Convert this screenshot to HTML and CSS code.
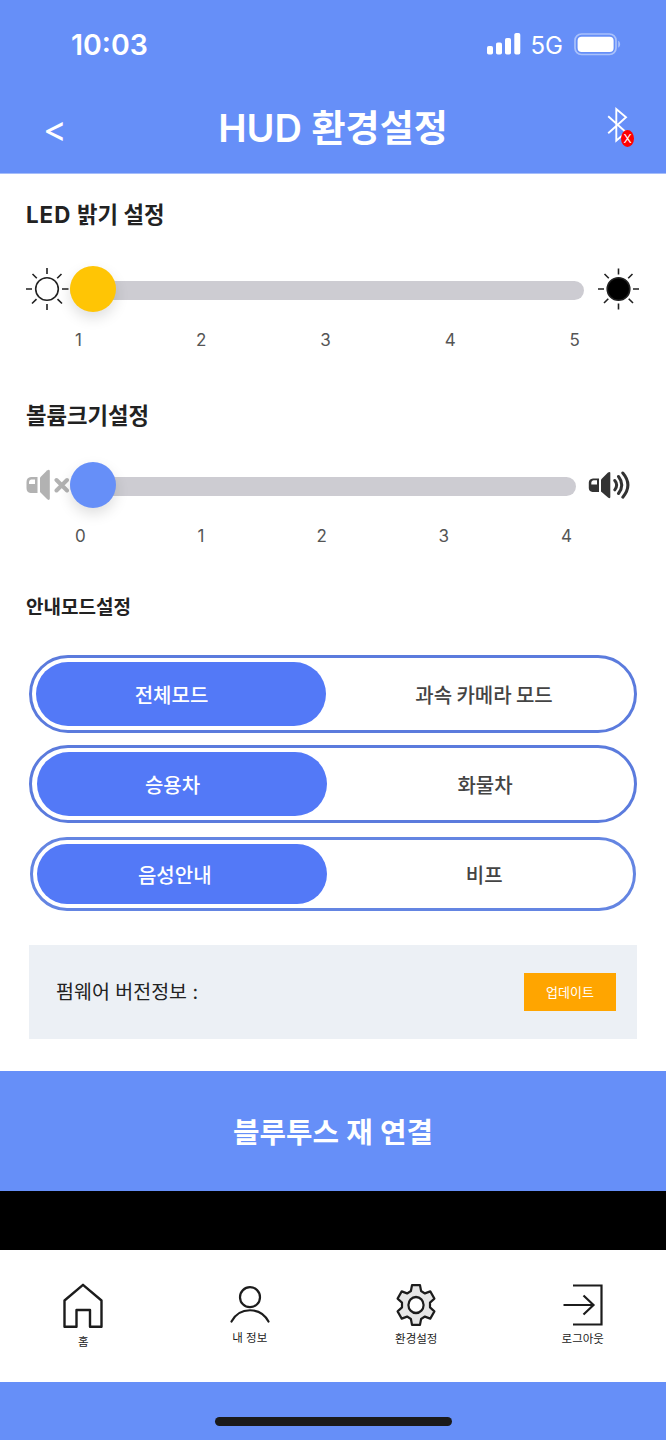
FILE: index.html
```html
<!DOCTYPE html>
<html lang="ko">
<head>
  <meta charset="UTF-8" />
  <meta name="viewport" content="width=device-width, initial-scale=1.0" />
  <title>HUD 환경설정</title>
  <link rel="stylesheet" href="styles.css">
</head>
<body>

  <div class="status-bar">
    <span class="time">10:03</span>
    <div class="status-icons">
      <svg class="signal" width="34" height="22" viewBox="0 0 34 22" fill="#fff">
        <rect x="0" y="13" width="6" height="8.5" rx="1.8" />
        <rect x="9" y="9.5" width="6" height="12" rx="1.8" />
        <rect x="18" y="5" width="6" height="16.5" rx="1.8" />
        <rect x="27.3" y="0" width="6" height="21.5" rx="1.8" />
      </svg>
      <span class="network">5G</span>
      <svg class="battery" width="48" height="23" viewBox="0 0 48 23">
        <rect x="1" y="1" width="41" height="20.5" rx="6.5" fill="none" stroke="#a9c1fb" stroke-width="1.7" />
        <rect x="3.6" y="3.7" width="36" height="15.2" rx="4" fill="#fff" />
        <path d="M44.2 7.8c2.6 1.3 2.6 5.6 0 7z" fill="#a9c1fb" />
      </svg>
    </div>
  </div>

  <header>
    <a class="back" href="#">&lt;</a>
    <h1>HUD <span>환경설정</span></h1>
    <div class="bluetooth">
      <svg width="22" height="38" viewBox="0 0 22 38" fill="none" stroke="#fff" stroke-width="1.9">
        <path d="M1.2 10.2L19 26.2L9.3 34.6V3L19 11.2L1.2 27.2" />
      </svg>
      <span class="badge">X</span>
    </div>
  </header>

  <main>
    <!-- LED 밝기 -->
    <section class="setting">
      <h2><span>LED</span> 밝기 설정</h2>
      <div class="slider-row">
        <svg width="43" height="42" viewBox="0 0 43 42" fill="none" stroke="#222" stroke-width="1.6">
          <circle cx="21" cy="21" r="11.3" />
          <path d="M21 0v6M21 36v6M0 21h6M36 21h6.5M6.5 6l4.3 4.3M35.5 6l-4.3 4.3M6 35.5l4.5-4.3M36 35.5l-4.5-4.3" />
        </svg>
        <div class="slider">
          <div class="thumb yellow"></div>
        </div>
        <svg width="41" height="42" viewBox="0 0 41 42" stroke="#222" stroke-width="1.6">
          <circle cx="20.5" cy="21" r="11.3" fill="#000" />
          <path d="M20.5 0.5v6M20.5 35.5v6M0 21h6M35 21h6M6.5 6l4.3 4.3M34.5 6l-4.3 4.3M6 35l4.3-4.3M35 35l-4.3-4.3" />
        </svg>
      </div>
      <div class="ticks">
        <span>1</span><span>2</span><span>3</span><span>4</span><span>5</span>
      </div>
    </section>

    <!-- 볼륨 -->
    <section class="setting volume">
      <h2>볼륨크기설정</h2>
      <div class="slider-row">
        <svg width="43" height="32" viewBox="0 0 43 32" fill="#b2b2b2">
          <path fill-rule="evenodd" d="M5 8h6.500V24H4.500Q.5 23.500 .5 19V13Q.5 8.500 5 8zM5 10.500Q3 11 3 13V15H9V10.500z" />
          <path d="M14 8.500L21 1.500Q23.500 0 23.800 2V29.500Q23.500 32 21 30L14 23z" />
          <path d="M30.500 11l10.500 10.500M41 11L30.500 21.500" stroke="#b2b2b2" stroke-width="4" stroke-linecap="round" />
        </svg>
        <div class="slider">
          <div class="thumb"></div>
        </div>
        <svg width="43" height="28" viewBox="0 0 43 28" fill="#333">
          <path fill-rule="evenodd" d="M5 7.500h6V21H4.500Q.8 20.500 .8 17V11.500Q.8 8 5 7.500zM5.500 9.300Q3.500 9.700 3.300 11.500V13.500H9V9.300z" />
          <path d="M13 8.500L20 1.500Q22.300 .3 22.300 2V26Q22.300 28 20 26.500L13 20.500z" />
          <path d="M26.800 9.500Q30.500 14 26.800 18.800M30.500 5.500Q37 14 30.500 22.500M34.800 2Q45 14 34.800 26.200" fill="none" stroke="#333" stroke-width="3" stroke-linecap="round" />
        </svg>
      </div>
      <div class="ticks">
        <span>0</span><span>1</span><span>2</span><span>3</span><span>4</span>
      </div>
    </section>

    <!-- 안내모드 -->
    <section class="modes">
      <h3>안내모드설정</h3>
      <div class="toggle">
        <button class="active">전체모드</button>
        <button>과속 카메라 모드</button>
      </div>
      <div class="toggle car">
        <button class="active">승용차</button>
        <button>화물차</button>
      </div>
      <div class="toggle sound">
        <button class="active">음성안내</button>
        <button>비프</button>
      </div>
    </section>

    <div class="firmware">
      <span>펌웨어 버전정보 :</span>
      <button>업데이트</button>
    </div>
  </main>

  <button class="reconnect">블루투스 재 연결</button>
  <div class="spacer"></div>

  <nav>
    <a class="home" href="#">
      <svg width="42" height="46" viewBox="0 0 42 46" fill="none" stroke="#1c1c1c" stroke-width="2.4" stroke-linejoin="round">
        <path d="M2.500 17.500L21 1.800L39.500 17.500V43.800H28V27H14.500V43.800H2.500z" />
      </svg>
      홈
    </a>
    <a class="info" href="#">
      <svg width="42" height="40" viewBox="0 0 42 40" fill="none" stroke="#1c1c1c" stroke-width="2.2" stroke-linecap="round">
        <circle cx="21" cy="12.200" r="10" />
        <path d="M2.500 36.500C10.500 21.500 31.500 21.500 39.500 36.500" />
      </svg>
      내 정보
    </a>
    <a class="gear" href="#">
      <svg width="40" height="42" viewBox="0 0 40 40" preserveAspectRatio="none" fill="#e6e6e6" stroke="#1c1c1c" stroke-width="2.2" stroke-linejoin="round">
        <path d="M16 1.100H24L25.100 6.700L28.900 9L34.300 7.100L38.400 14L34 17.800V22.200L38.400 26L34.300 32.900L28.900 31L25.100 33.300L24 38.900H16L14.900 33.300L11.100 31L5.700 32.900L1.600 26L6 22.200V17.800L1.600 14L5.700 7.100L11.100 9L14.900 6.700z" />
        <circle cx="20" cy="20" r="7.600" fill="#fff" />
      </svg>
      환경설정
    </a>
    <a class="logout" href="#">
      <svg width="40" height="42" viewBox="0 0 40 42" fill="none" stroke="#1c1c1c" stroke-width="2.200">
        <path d="M10 1.500H38.500V40.500H10M.5 21H30M20.500 11.500L30.500 21L20.500 30.500" />
      </svg>
      로그아웃
    </a>
  </nav>

  <footer>
    <div class="home-indicator"></div>
  </footer>

</body>
</html>
```
FILE: styles.css
```css
/* RESET */
* {
  margin: 0;
  padding: 0;
  box-sizing: border-box;
}

body {
  width: 666px;
  height: 1440px;
  overflow: hidden;
  background-color: #fff;
  color: #222;
  font-family: Inter, "Noto Sans CJK KR", sans-serif;
}

button {
  border: none;
  background: none;
  font-family: inherit;
  color: inherit;
}

a {
  color: inherit;
  text-decoration: none;
}

svg {
  display: block;
  flex-shrink: 0;
}

/* STATUS BAR */
.status-bar {
  height: 90px;
  padding: 0 44px 2px 71px;
  background-color: #668ff8;
  color: #fff;
  display: flex;
  justify-content: space-between;
  align-items: center;
}
.time {
  font-size: 28.5px;
  font-weight: 600;
}
.status-icons {
  display: flex;
  align-items: center;
}
.network {
  margin: 2px 11px 0 10px;
  font-size: 24px;
}

/* HEADER */
header {
  height: 84px;
  padding: 0 32px 7px;
  background-color: #668ff8;
  border-bottom: 1px solid #a5bdfa;
  color: #fff;
  display: grid;
  grid-template-columns: 1fr auto 1fr;
  align-items: center;
}
.back {
  padding: 1px 0 0 11px;
  font-size: 36px;
  line-height: 40px;
}
h1 {
  font-size: 38px;
  line-height: 50px;
  font-weight: 600;
  white-space: nowrap;
}
h1 span {
  font-size: 37px;
}
.bluetooth {
  position: relative;
  top: -3px;
  justify-self: end;
  width: 27px;
  height: 38px;
}
.badge {
  position: absolute;
  right: 0;
  bottom: -3px;
  width: 13px;
  height: 17px;
  border-radius: 50%;
  background-color: #f00;
  font-size: 12px;
  line-height: 17px;
  text-align: center;
}

/* SLIDERS */
.setting {
  height: 202px;
  padding: 26px 27px 0 26px;
}
h2 {
  font-size: 22.3px;
  line-height: 30px;
  font-weight: 600;
}
h2 span {
  font-weight: 700;
  letter-spacing: 1px;
}
.slider-row {
  height: 46px;
  margin-top: 36px;
  display: flex;
  align-items: center;
}
.slider {
  flex: 1;
  height: 19px;
  margin: 2px 14px 0 1px;
  border-radius: 10px;
  background-color: #cdccd2;
  display: flex;
  align-items: center;
}
.thumb {
  width: 46px;
  height: 46px;
  margin-top: -2px;
  border-radius: 50%;
  background-color: #668ff8;
  box-shadow: 0 6px 14px rgba(0,0,0,0.13);
}
.thumb.yellow {
  background-color: #ffc505;
}
.ticks {
  margin: 17px 59px 0 49px;
  display: flex;
  justify-content: space-between;
  font-size: 17px;
  line-height: 22px;
  color: #555;
}
.volume {
  height: 196px;
  padding: 25px 35px 0 26px;
}
.volume .slider-row {
  margin-top: 31px;
}
.volume .slider {
  margin-right: 12px;
}

/* MODES */
.modes {
  padding: 23px 29px 0;
}
h3 {
  margin: 0 0 34px -3px;
  font-size: 19px;
  line-height: 26px;
  font-weight: 600;
}
.toggle {
  height: 78px;
  margin-bottom: 12px;
  padding: 4px;
  border: 3px solid #5b7bdd;
  border-radius: 39px;
  display: flex;
}
.toggle button {
  width: 290px;
  border-radius: 32px;
  font-size: 20px;
  font-weight: 500;
  color: #444;
  word-spacing: -1px;
}
.toggle button:last-child {
  margin-left: 13px;
}
.toggle .active {
  padding-right: 19px;
  background-color: #5379f7;
  color: #fff;
}
.car {
  padding-left: 5px;
  margin-bottom: 14px;
}
.sound {
  height: 74px;
  margin: 0 1px;
  border-color: #6485e2;
}
.sound .active {
  padding-right: 14px;
}

/* FIRMWARE */
.firmware {
  height: 94px;
  margin: 34px 29px 32px;
  padding: 0 21px 0 27px;
  background-color: #ecf0f5;
  display: flex;
  justify-content: space-between;
  align-items: center;
  font-size: 19.5px;
}
.firmware span {
  padding-bottom: 3px;
}
.firmware button {
  width: 92px;
  height: 38px;
  padding-bottom: 2px;
  background-color: #ffa500;
  color: #fff;
  font-size: 13px;
}

.reconnect {
  display: block;
  width: 100%;
  height: 120px;
  padding-bottom: 2px;
  background-color: #668ff8;
  color: #fff;
  font-size: 28.8px;
  font-weight: 600;
}

.spacer {
  height: 59px;
  background-color: #000;
}

/* NAV */
nav {
  height: 132px;
  display: grid;
  grid-template-columns: repeat(4, 1fr);
}
nav a {
  padding-top: 34px;
  display: flex;
  flex-direction: column;
  align-items: center;
  font-size: 11.5px;
  line-height: 26px;
}
.home {
  padding-top: 33px;
}
.info {
  padding-top: 35px;
}

footer {
  height: 58px;
  padding-top: 35px;
  background-color: #668ff8;
}
.home-indicator {
  width: 237px;
  height: 9px;
  margin: 0 auto;
  border-radius: 5px;
  background-color: #1a1a1a;
}
```
